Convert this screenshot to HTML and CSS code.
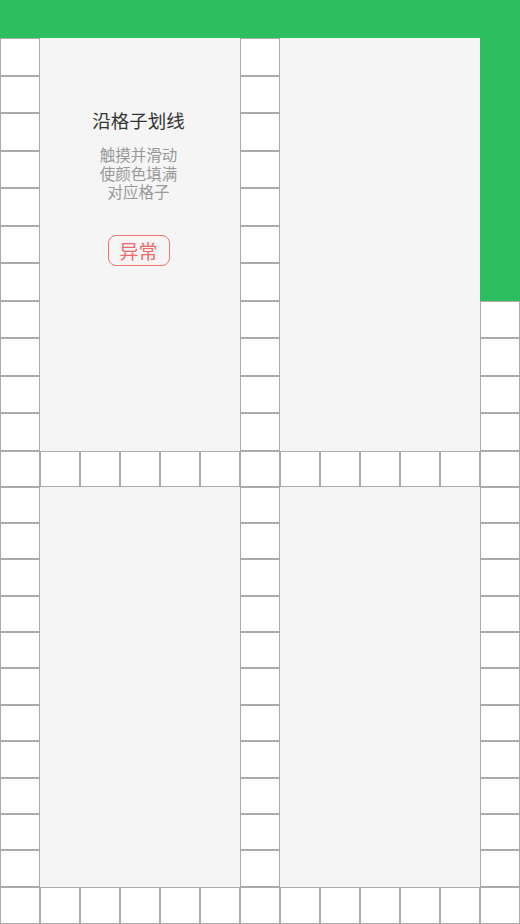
FILE: index.html
```html
<!DOCTYPE html>
<html lang="zh-CN">
<head>
<meta charset="utf-8">
<title>沿格子划线</title>
<link rel="stylesheet" href="styles.css">
</head>
<body>
<div class="board">
  <div class="panel panel-tl">
    <div class="title">沿格子划线</div>
    <div class="hint">触摸并滑动<br>使颜色填满<br>对应格子</div>
    <div class="btn">异常</div>
  </div>
  <div class="panel panel-tr"></div>
  <div class="panel panel-bl"></div>
  <div class="panel panel-br"></div>

  <!-- row 1 -->
  <div class="cell on"></div><div class="cell on"></div><div class="cell on"></div><div class="cell on"></div><div class="cell on"></div><div class="cell on"></div><div class="cell on"></div><div class="cell on"></div><div class="cell on"></div><div class="cell on"></div><div class="cell on"></div><div class="cell on"></div><div class="cell on"></div>
  <!-- rows 2-8 -->
  <div class="cell"></div><div class="cell"></div><div class="cell on"></div>
  <div class="cell"></div><div class="cell"></div><div class="cell on"></div>
  <div class="cell"></div><div class="cell"></div><div class="cell on"></div>
  <div class="cell"></div><div class="cell"></div><div class="cell on"></div>
  <div class="cell"></div><div class="cell"></div><div class="cell on"></div>
  <div class="cell"></div><div class="cell"></div><div class="cell on"></div>
  <div class="cell"></div><div class="cell"></div><div class="cell on"></div>
  <!-- rows 9-12 -->
  <div class="cell"></div><div class="cell"></div><div class="cell"></div>
  <div class="cell"></div><div class="cell"></div><div class="cell"></div>
  <div class="cell"></div><div class="cell"></div><div class="cell"></div>
  <div class="cell"></div><div class="cell"></div><div class="cell"></div>
  <!-- row 13 -->
  <div class="cell"></div><div class="cell"></div><div class="cell"></div><div class="cell"></div><div class="cell"></div><div class="cell"></div><div class="cell"></div><div class="cell"></div><div class="cell"></div><div class="cell"></div><div class="cell"></div><div class="cell"></div><div class="cell"></div>
  <!-- rows 14-24 -->
  <div class="cell"></div><div class="cell"></div><div class="cell"></div>
  <div class="cell"></div><div class="cell"></div><div class="cell"></div>
  <div class="cell"></div><div class="cell"></div><div class="cell"></div>
  <div class="cell"></div><div class="cell"></div><div class="cell"></div>
  <div class="cell"></div><div class="cell"></div><div class="cell"></div>
  <div class="cell"></div><div class="cell"></div><div class="cell"></div>
  <div class="cell"></div><div class="cell"></div><div class="cell"></div>
  <div class="cell"></div><div class="cell"></div><div class="cell"></div>
  <div class="cell"></div><div class="cell"></div><div class="cell"></div>
  <div class="cell"></div><div class="cell"></div><div class="cell"></div>
  <div class="cell"></div><div class="cell"></div><div class="cell"></div>
  <!-- row 25 -->
  <div class="cell"></div><div class="cell"></div><div class="cell"></div><div class="cell"></div><div class="cell"></div><div class="cell"></div><div class="cell"></div><div class="cell"></div><div class="cell"></div><div class="cell"></div><div class="cell"></div><div class="cell"></div><div class="cell"></div>
</div>
</body>
</html>
```
FILE: styles.css
```css
html, body {
  margin: 0;
  padding: 0;
  background: #ffffff;
}

body {
  font-family: "Noto Sans CJK SC", "Noto Sans", sans-serif;
}

.board {
  width: 520px;
  height: 924px;
  display: grid;
  grid-template-columns: repeat(13, 40px);
  grid-template-rows: 38px repeat(11, 37.5px) 36px repeat(11, 36.4px) 37px;
  overflow: hidden;
}

.cell {
  box-sizing: border-box;
  border: 1px solid #ababab;
  background: #ffffff;
}

.cell.on {
  background: #2dbe60;
  border-color: #2dbe60;
}

.panel {
  background: #f5f5f5;
  display: flex;
  flex-direction: column;
  align-items: center;
}

.panel-tl {
  grid-column: 2 / 7;
  grid-row: 2 / 13;
  padding-right: 3px;
}
.panel-tr { grid-column: 8 / 13; grid-row: 2 / 13; }
.panel-bl { grid-column: 2 / 7; grid-row: 14 / 25; }
.panel-br { grid-column: 8 / 13; grid-row: 14 / 25; }

.title {
  margin-top: 70px;
  font-size: 18.5px;
  line-height: 24px;
  color: #333333;
}

.hint {
  margin-top: 13px;
  font-size: 15.5px;
  line-height: 18.5px;
  color: #999999;
  text-align: center;
}

.btn {
  margin-top: 34px;
  box-sizing: border-box;
  width: 62px;
  height: 31px;
  border: 1px solid #f07272;
  border-radius: 8px;
  color: #f06a6a;
  font-size: 19px;
  line-height: 29px;
  text-align: center;
}
```
